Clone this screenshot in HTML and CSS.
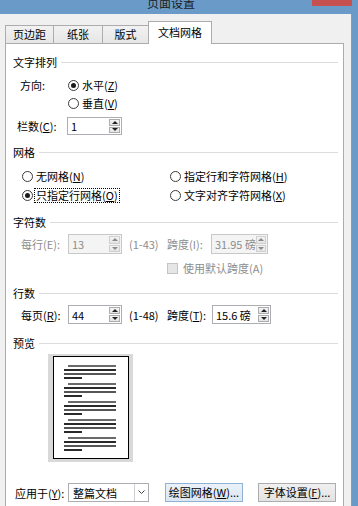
FILE: index.html
```html
<!DOCTYPE html>
<html>
<head>
    <title>页面设置</title>
    <link rel="stylesheet" href="styles.css">
</head>
<body>
    <div class="titlebar">
        <span class="title">页面设置</span>
        <span class="close"></span>
    </div>
    <div class="frame">
        <div class="client">
            <div class="tabs">
                <div class="tab tab-margins">页边距</div>
                <div class="tab tab-paper">纸张</div>
                <div class="tab tab-layout">版式</div>
                <div class="tab tab-grid active">文档网格</div>
            </div>
            <div class="panel">
                <!-- 文字排列 -->
                <div class="group-title"><span>文字排列</span></div>
                <div class="row row-dir">
                    <span class="lbl lbl-dir">方向:</span>
                    <span class="radio checked"></span><span class="opt">水平(<u>Z</u>)</span>
                </div>
                <div class="row row-dir2">
                    <span class="radio"></span><span class="opt">垂直(<u>V</u>)</span>
                </div>
                <div class="row row-cols">
                    <span class="lbl lbl-cols">栏数(<u>C</u>):</span>
                    <div class="spin spin-cols">
                        <span class="val">1</span>
                        <span class="arrows"><i class="up"></i><i class="dn"></i></span>
                    </div>
                </div>

                <!-- 网格 -->
                <div class="group-title gt-grid"><span>网格</span></div>
                <div class="row row-grid">
                    <div class="grid-col">
                        <span class="radio"></span><span class="opt">无网格(<u>N</u>)</span>
                    </div>
                    <div class="grid-col">
                        <span class="radio"></span><span class="opt">指定行和字符网格(<u>H</u>)</span>
                    </div>
                </div>
                <div class="row row-grid row-grid2">
                    <div class="grid-col">
                        <span class="radio checked"></span><span class="opt focus">只指定行网格(<u>O</u>)</span>
                    </div>
                    <div class="grid-col">
                        <span class="radio"></span><span class="opt">文字对齐字符网格(<u>X</u>)</span>
                    </div>
                </div>

                <!-- 字符数 -->
                <div class="group-title gt-chars"><span>字符数</span></div>
                <div class="row row-num disabled">
                    <span class="lbl lbl-num">每行(E):</span>
                    <div class="spin spin-num">
                        <span class="val">13</span>
                        <span class="arrows"><i class="up"></i><i class="dn"></i></span>
                    </div>
                    <span class="range">(1-43)</span>
                    <span class="lbl lbl-pitch">跨度(I):</span>
                    <div class="spin spin-pitch">
                        <span class="val">31.95 磅</span>
                        <span class="arrows"><i class="up"></i><i class="dn"></i></span>
                    </div>
                </div>
                <div class="row row-check disabled">
                    <span class="check"></span><span class="opt">使用默认跨度(A)</span>
                </div>

                <!-- 行数 -->
                <div class="group-title gt-lines"><span>行数</span></div>
                <div class="row row-num row-lines">
                    <span class="lbl lbl-num">每页(<u>R</u>):</span>
                    <div class="spin spin-num">
                        <span class="val">44</span>
                        <span class="arrows"><i class="up"></i><i class="dn"></i></span>
                    </div>
                    <span class="range">(1-48)</span>
                    <span class="lbl lbl-pitch2">跨度(<u>T</u>):</span>
                    <div class="spin spin-pitch2">
                        <span class="val">15.6 磅</span>
                        <span class="arrows"><i class="up"></i><i class="dn"></i></span>
                    </div>
                </div>

                <!-- 预览 -->
                <div class="group-title gt-preview"><span>预览</span></div>
                <div class="preview">
                    <div class="page">
                        <div class="para"><i class="l1"></i><i class="l2"></i><i class="l3"></i><i class="l4"></i></div>
                        <div class="para"><i class="l1"></i><i class="l2"></i><i class="l3"></i><i class="l4"></i></div>
                        <div class="para"><i class="l1"></i><i class="l2"></i><i class="l3"></i><i class="l4"></i></div>
                        <div class="para"><i class="l1"></i><i class="l2"></i><i class="l3"></i><i class="l4"></i></div>
                        <div class="para"><i class="l1"></i><i class="l2"></i><i class="l3"></i><i class="l4"></i></div>
                    </div>
                </div>

                <div class="row row-bottom">
                    <span class="lbl lbl-apply">应用于(<u>Y</u>):</span>
                    <div class="select">
                        <span class="val">整篇文档</span>
                        <span class="drop">
                            <svg width="7" height="5" viewBox="0 0 7 5"><polyline points="0.5,0.5 3.5,3.5 6.5,0.5" fill="none" stroke="#444" stroke-width="1"/></svg>
                        </span>
                    </div>
                    <button class="btn btn-default">绘图网格(<u>W</u>)...</button>
                    <button class="btn btn-font">字体设置(<u>F</u>)...</button>
                </div>
            </div>
        </div>
    </div>
</body>
</html>
```

FILE: styles.css
```css
* {
    box-sizing: border-box;
}

body {
    margin: 0;
    width: 358px;
    height: 506px;
    overflow: hidden;
    font-family: "Noto Sans CJK SC", "Noto Sans", sans-serif;
    font-size: 11px;
    color: #000;
    background: #6a9bc8;
}

u {
    text-decoration: underline;
}

.titlebar {
    position: relative;
    height: 14px;
    overflow: hidden;
    background: #6a9bc8;
}

.title {
    display: block;
    padding-left: 147px;
    margin-top: -3px;
    font-size: 12px;
    line-height: 12px;
    color: #1a1a1a;
}

.close {
    position: absolute;
    left: 312px;
    top: 0;
    width: 40px;
    height: 6px;
    background: #c75050;
}

.frame {
    display: flex;
    height: 492px;
}

.client {
    width: 352px;
    height: 492px;
    border-right: 1px solid #8e9aa8;
    background: #f0f0f0;
}

/* tabs */
.tabs {
    position: relative;
    z-index: 1;
    display: flex;
    align-items: flex-end;
    height: 29px;
    padding-left: 5px;
}

.tab {
    height: 18px;
    margin-right: -1px;
    border: 1px solid #acacac;
    border-bottom: none;
    background: linear-gradient(#f2f2f2, #e6e6e6);
    text-align: center;
    line-height: 16px;
}

.tab-margins { width: 49px; }
.tab-paper { width: 50px; }
.tab-layout { width: 47px; }

.tab.active {
    width: 64px;
    height: 23px;
    margin-bottom: -1px;
    background: #fff;
    line-height: 20px;
}

.panel {
    width: 339px;
    height: 463px;
    margin-left: 5px;
    padding: 11px 5px 0 7px;
    border: 1px solid #acacac;
    border-bottom: none;
    background: #fff;
}

/* group headers */
.group-title {
    display: flex;
    align-items: center;
    height: 14px;
    line-height: 14px;
}

.group-title::after {
    content: "";
    flex: 1;
    height: 1px;
    margin-left: 4px;
    background: #dcdcdc;
}

.gt-grid { margin-top: 10px; }
.gt-chars { margin-top: 12px; }
.gt-lines { margin-top: 10px; }
.gt-preview { margin-top: 12px; }

/* rows */
.row {
    display: flex;
    align-items: center;
    height: 16px;
    white-space: nowrap;
}

.lbl {
    flex: none;
}

.row-dir { margin-top: 8px; padding-left: 7px; }
.lbl-dir { width: 48px; }
.row-dir2 { margin-top: 2px; padding-left: 55px; }

.row-cols { margin-top: 6px; height: 18px; padding-left: 4px; }
.lbl-cols { width: 50px; }
.spin-cols { width: 55px; }

.row-grid { margin-top: 9px; padding-left: 9px; }
.row-grid2 { margin-top: 3px; }
.grid-col {
    display: flex;
    align-items: center;
    width: 148px;
}

.row-num { margin-top: 5px; height: 20px; padding-left: 8px; }
.row-lines { height: 19px; }
.lbl-num { width: 47px; }
.spin-num { width: 54px; }
.range { width: 38px; margin-left: 7px; }
.lbl-pitch { width: 44px; }
.spin-pitch { width: 57px; }
.lbl-pitch2 { width: 45px; }
.spin-pitch2 { width: 59px; }

.row-check { margin-top: 6px; padding-left: 154px; }

.disabled {
    color: #8d8d8d;
}

/* radio and checkbox */
.radio {
    position: relative;
    flex: none;
    width: 11px;
    height: 11px;
    border: 1px solid #3c3c3c;
    border-radius: 50%;
    background: #fff;
}

.radio.checked::after {
    content: "";
    position: absolute;
    left: 2px;
    top: 2px;
    width: 5px;
    height: 5px;
    border-radius: 50%;
    background: #1a1a1a;
}

.opt {
    margin-left: 3px;
}

.opt.focus {
    margin-left: 1px;
    padding: 0 1px;
    height: 15px;
    line-height: 13px;
    border: 1px dotted #000;
}

.check {
    flex: none;
    width: 11px;
    height: 11px;
    border: 1px solid #c4c4c4;
    background: #e6e6e6;
}

.row-check .opt {
    margin-left: 5px;
}

/* spin boxes */
.spin {
    display: flex;
    align-items: center;
    height: 100%;
    border: 1px solid #abadb3;
    background: #fff;
}

.spin .val {
    flex: 1;
    padding-left: 3px;
}

.arrows {
    display: flex;
    flex-direction: column;
    width: 12px;
    height: 100%;
    padding: 1px 1px 1px 0;
}

.arrows i {
    flex: 1;
    display: flex;
    align-items: center;
    justify-content: center;
    border: 1px solid #acacac;
    background: linear-gradient(#f4f4f4, #e4e4e4);
}

.arrows i + i {
    margin-top: 1px;
}

.arrows .up::after {
    content: "";
    border-left: 3px solid transparent;
    border-right: 3px solid transparent;
    border-bottom: 3px solid #222;
}

.arrows .dn::after {
    content: "";
    border-left: 3px solid transparent;
    border-right: 3px solid transparent;
    border-top: 3px solid #222;
}

.disabled .spin {
    border-color: #c8c8c8;
    background: #f4f4f4;
}

.disabled .arrows i {
    border-color: #cfcfcf;
}

.disabled .arrows .up::after {
    border-bottom-color: #8a8a8a;
}

.disabled .arrows .dn::after {
    border-top-color: #8a8a8a;
}

/* preview */
.preview {
    width: 85px;
    height: 108px;
    margin-top: 4px;
    margin-left: 35px;
    padding: 2px 4px 3px 5px;
    background: #d9d9d9;
}

.page {
    width: 76px;
    height: 103px;
    padding-top: 8px;
    border: 1px solid #000;
    background: #fff;
}

.para {
    margin-bottom: 4px;
}

.para i {
    display: block;
    height: 2px;
    margin-bottom: 2px;
    margin-left: 10px;
    width: 52px;
    background: #2a2a2a;
}

.para .l1 {
    margin-left: 14px;
    width: 48px;
    background: #6a6a6a;
}

.para .l3 {
    background: #555;
}

.para .l4 {
    width: 18px;
}

/* bottom row */
.row-bottom {
    margin-top: 21px;
    height: 19px;
    padding-left: 2px;
}

.lbl-apply { width: 53px; }

.select {
    display: flex;
    align-items: center;
    width: 81px;
    height: 100%;
    border: 1px solid #abadb3;
    background: #fff;
}

.select .val {
    flex: 1;
    padding-left: 4px;
}

.drop {
    display: flex;
    align-items: center;
    justify-content: center;
    width: 14px;
    height: 100%;
    border-left: 1px solid #d0d0d0;
}

.btn {
    height: 19px;
    width: 78px;
    padding: 0;
    font-family: inherit;
    font-size: 11px;
    line-height: 17px;
    color: #000;
    border: 1px solid #adadad;
    background: linear-gradient(#f0f0f0, #e3e3e3);
}

.btn-default {
    margin-left: 16px;
    border-color: #8fb1d4;
    background: linear-gradient(#eaf1f8, #dce7f2);
}

.btn-font {
    margin-left: 15px;
}
```
